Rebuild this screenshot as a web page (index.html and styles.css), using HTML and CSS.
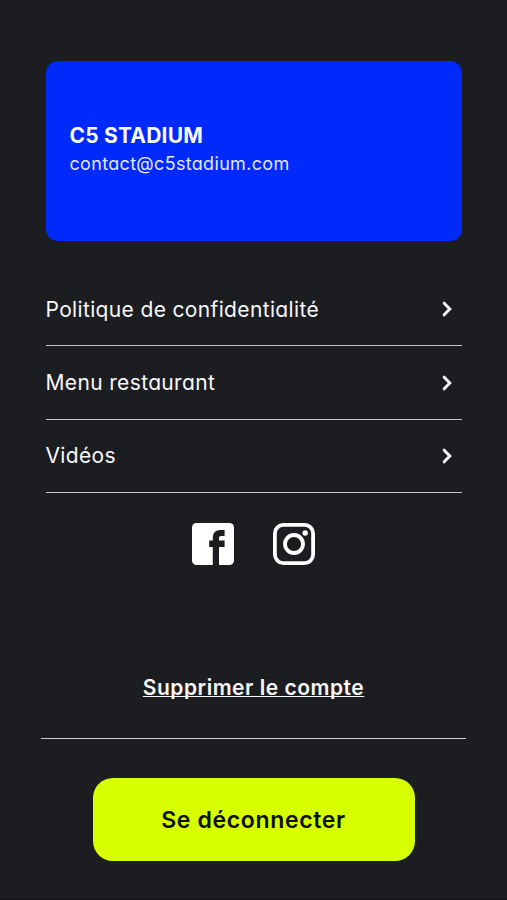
FILE: index.html
```html
<!DOCTYPE html>
<html lang="fr">

<head>
    <meta charset="UTF-8">
    <meta name="viewport" content="width=device-width, initial-scale=1.0">
    <title>C5 Stadium - Profil</title>
    <link rel="stylesheet" href="styles.css">
</head>

<body>
    <main class="profile">
        <section class="card">
            <h1 class="card-name">C5 STADIUM</h1>
            <p class="card-mail">contact@c5stadium.com</p>
        </section>

        <nav class="menu">
            <a class="menu-item">
                <span>Politique de confidentialité</span>
                <svg class="chevron" viewBox="0 0 10 16"><path d="M2.2 2.2L7.8 8l-5.6 5.8" /></svg>
            </a>
            <a class="menu-item">
                <span>Menu restaurant</span>
                <svg class="chevron" viewBox="0 0 10 16"><path d="M2.2 2.2L7.8 8l-5.6 5.8" /></svg>
            </a>
            <a class="menu-item">
                <span>Vidéos</span>
                <svg class="chevron" viewBox="0 0 10 16"><path d="M2.2 2.2L7.8 8l-5.6 5.8" /></svg>
            </a>
        </nav>

        <div class="social">
            <!-- facebook -->
            <svg class="social-icon" viewBox="0 0 42 42">
                <rect width="42" height="42" rx="4.5" fill="#fff" />
                <path d="M20.8 42V23.9h-3.6v-6.3h3.6v-2.4c0-5.3 2.8-8.1 7.6-8.1h4.2v5.8h-3.2c-1.8 0-2.4.7-2.4 2.3v2.4h5.6v6.3h-5.6V42z" fill="#1c1d20" />
            </svg>
            <!-- instagram -->
            <svg class="social-icon" viewBox="0 0 42 42" fill="none" stroke="#fff">
                <rect x="1.9" y="1.9" width="38.2" height="38.2" rx="8.5" stroke-width="3.8" />
                <circle cx="21" cy="21" r="9" stroke-width="3.8" />
                <circle cx="32.2" cy="10" r="2.7" fill="#fff" stroke="none" />
            </svg>
        </div>

        <a class="delete">Supprimer le compte</a>
        <hr class="divider">
        <button class="logout">Se déconnecter</button>
    </main>
</body>

</html>
```
FILE: styles.css
```css
* {
    box-sizing: border-box;
    margin: 0;
    padding: 0;
}

body {
    background-color: #1c1d20;
    color: #f8f8fa;
    font-family: Inter, "Open Sans", sans-serif;
    font-feature-settings: "cv11";
}

.profile {
    display: flex;
    flex-direction: column;
    align-items: center;
    height: 900px;
    padding-top: 61px;
    border-bottom: 1px solid #161016;
}

.card {
    display: flex;
    flex-direction: column;
    width: 416px;
    height: 180px;
    padding: 59px 24px 0;
    border-radius: 12px;
    background-color: #0029fb;
}

.card-name {
    font-size: 21px;
    font-weight: 700;
    line-height: 32px;
    letter-spacing: 0.2px;
}

.card-mail {
    font-size: 18px;
    line-height: 23px;
    letter-spacing: 0.32px;
    color: #e2e7ff;
}

.menu {
    width: 416px;
    margin-top: 32px;
}

.menu-item {
    display: flex;
    justify-content: space-between;
    align-items: center;
    height: 73.4px;
    padding-right: 10px;
    border-bottom: 1.5px solid #c4c5c8;
    font-size: 21px;
    letter-spacing: 0.35px;
}

.chevron {
    width: 10px;
    height: 16px;
    fill: none;
    stroke: #f4f4f6;
    stroke-width: 3;
    stroke-linecap: round;
}

.social {
    display: flex;
    gap: 39px;
    margin-top: 30px;
}

.social-icon {
    width: 42px;
    height: 42px;
}

.delete {
    margin-top: 108px;
    font-size: 21px;
    font-weight: 600;
    line-height: 30px;
    letter-spacing: 0.52px;
    text-decoration: underline 1px;
    text-underline-offset: 1px;
    text-decoration-skip-ink: none;
}

.divider {
    width: 425px;
    margin-top: 35px;
    border: none;
    border-top: 1px solid #cfcfd2;
}

.logout {
    width: 322px;
    height: 83px;
    margin-top: 39px;
    border: none;
    border-radius: 20px;
    background-color: #d7ff00;
    color: #0d1005;
    font: inherit;
    font-feature-settings: inherit;
    font-size: 23px;
    font-weight: 600;
    letter-spacing: 0.65px;
}
```
